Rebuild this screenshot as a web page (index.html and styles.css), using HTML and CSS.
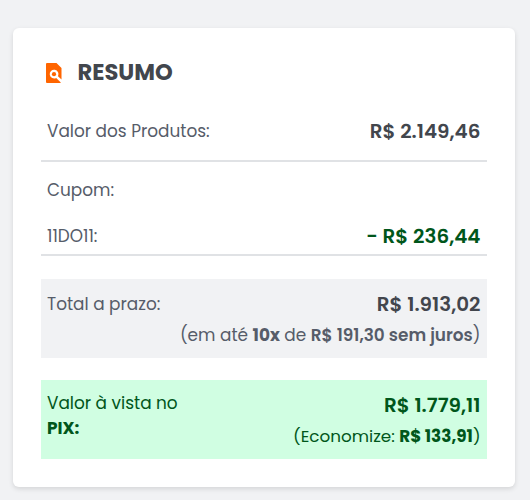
FILE: index.html
```
<!DOCTYPE html>
<html lang="pt-BR">
<head>
    <meta charset="utf-8">
    <meta name="viewport" content="width=device-width, initial-scale=1">
    <title>Resumo</title>
    <link rel="stylesheet" href="styles.css">
</head>
<body>
    <section class="summary">
        <h2 class="title">
            <svg class="title-icon" width="16" height="20" viewBox="0 0 16 20">
                <path fill="#ff6500" d="M1 0H10.5L15.5 5V16.6L12 13.2A4.4 4.4 0 1 0 10.2 15L14.8 19.4Q14.4 20 14 20H1Q0 20 0 19V1Q0 0 1 0Z"/>
                <circle cx="8" cy="11.2" r="2.1" fill="#ff6500"/>
            </svg>
            <span class="title-text">RESUMO</span>
        </h2>

        <div class="row row-products">
            <span class="label label-products">Valor dos Produtos:</span>
            <span class="price price-products">R$ 2.149,46</span>
        </div>

        <div class="coupon">
            <div class="label label-coupon">Cupom:</div>
            <div class="row">
                <span class="label label-code">11DO11:</span>
                <span class="price price-discount">- R$ 236,44</span>
            </div>
        </div>

        <div class="box box-total">
            <span class="label label-total">Total a prazo:</span>
            <span class="price price-total">R$ 1.913,02</span>
            <span class="note note-total">(em até <b>10x</b> de <b class="semi">R$ 191,30 sem juros</b>)</span>
        </div>

        <div class="box box-pix">
            <span class="label label-pix">Valor à vista no <b class="pix">PIX:</b></span>
            <span class="price price-pix">R$ 1.779,11</span>
            <span class="note note-pix">(Economize: <b>R$ 133,91</b>)</span>
        </div>
    </section>
</body>
</html>
```
FILE: styles.css
```
* {
    box-sizing: border-box;
}

body {
    margin: 0;
    padding: 28px 15.5px 12px 12.5px;
    height: 500px;
    background-color: #f1f2f4;
    color: #565c69;
    font-family: Poppins, Inter, sans-serif;
    font-size: 16.9px;
    overflow: hidden;
}

.summary {
    height: 459px;
    padding: 30px 28px 28px 28.5px;
    background-color: #fff;
    border-radius: 6px;
    box-shadow: 0 2px 5px rgba(0, 0, 0, 0.12);
}

.title {
    display: flex;
    align-items: center;
    height: 30px;
    margin: 0;
    padding-left: 5px;
    color: #42464d;
    font-size: 22.6px;
    font-weight: 700;
}

.title-icon {
    margin-right: 15.5px;
}

.title-text {
    margin-top: -2px;
}

.row {
    display: flex;
    justify-content: space-between;
    align-items: center;
    padding: 0 6px;
}

.row-products {
    height: 74px;
    padding-top: 13px;
    border-bottom: 2px solid #e0e2e5;
}

.label,
.note,
.price {
    line-height: 26px;
    white-space: nowrap;
}

.price {
    color: #42464d;
    font-size: 19.9px;
    font-weight: 600;
}

.coupon {
    height: 94px;
    padding-top: 15px;
    border-bottom: 2px solid #e0e2e5;
}

.label-coupon {
    margin-bottom: 20px;
    padding-left: 6px;
}

.price-discount {
    color: #00561b;
}

.box {
    display: grid;
    grid-template-columns: 150px 1fr;
    grid-template-rows: 31px 26px;
    height: 79px;
    padding: 12px 6px;
}

.box .price,
.note {
    justify-self: end;
}

.note {
    grid-column: 1 / 3;
}

.note b {
    font-weight: 700;
}

.note .semi {
    font-weight: 600;
}

.box-total {
    margin-top: 23px;
    background-color: #f1f2f4;
}

.box-pix {
    margin-top: 22px;
    background-color: #d0fee2;
    color: #00561b;
}

.box-pix .price {
    color: #00561b;
}

.box-pix .note {
    font-size: 16.8px;
}

.label-pix {
    height: 26px;
    margin-top: -1px;
    line-height: 25px;
}

.pix {
    display: block;
}
```
